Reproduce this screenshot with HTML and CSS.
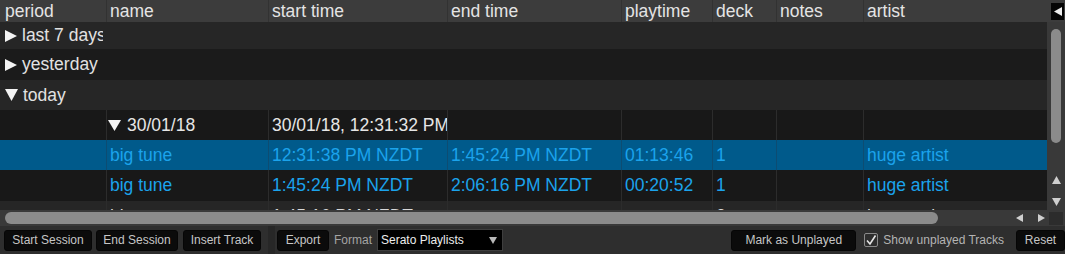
FILE: index.html
```html
<!DOCTYPE html>
<html lang="en">
<head>
  <meta charset="UTF-8">
  <title>History</title>
  <link rel="stylesheet" href="styles.css">
</head>
<body>
  <div class="main">
    <div class="table">
      <div class="row head">
        <div class="cell">period</div>
        <div class="cell">name</div>
        <div class="cell">start time</div>
        <div class="cell">end time</div>
        <div class="cell">playtime</div>
        <div class="cell">deck</div>
        <div class="cell">notes</div>
        <div class="cell">artist</div>
      </div>

      <div class="row group r1">
        <div class="cell period"><svg class="tri" width="12" height="12" viewBox="0 0 12 12"><path d="M0 0L12 6L0 12Z" fill="#f4f4f4"/></svg>last 7 days</div>
      </div>
      <div class="row group r2">
        <div class="cell period"><svg class="tri" width="12" height="12" viewBox="0 0 12 12"><path d="M0 0L12 6L0 12Z" fill="#f4f4f4"/></svg>yesterday</div>
      </div>
      <div class="row group r3">
        <div class="cell period"><svg class="tri" width="13" height="12" viewBox="0 0 13 12"><path d="M0 0H13L6.5 12Z" fill="#f4f4f4"/></svg>today</div>
      </div>

      <div class="row data session">
        <div class="cell"></div>
        <div class="cell name"><svg class="tri down" width="13" height="11" viewBox="0 0 13 11"><path d="M0 0H13L6.5 11Z" fill="#f4f4f4"/></svg>30/01/18</div>
        <div class="cell">30/01/18, 12:31:32 PM NZDT</div>
        <div class="cell"></div>
        <div class="cell"></div>
        <div class="cell"></div>
        <div class="cell"></div>
        <div class="cell"></div>
      </div>
      <div class="row data track selected">
        <div class="cell"></div>
        <div class="cell">big tune</div>
        <div class="cell">12:31:38 PM NZDT</div>
        <div class="cell">1:45:24 PM NZDT</div>
        <div class="cell">01:13:46</div>
        <div class="cell">1</div>
        <div class="cell"></div>
        <div class="cell">huge artist</div>
      </div>
      <div class="row data track">
        <div class="cell"></div>
        <div class="cell">big tune</div>
        <div class="cell">1:45:24 PM NZDT</div>
        <div class="cell">2:06:16 PM NZDT</div>
        <div class="cell">00:20:52</div>
        <div class="cell">1</div>
        <div class="cell"></div>
        <div class="cell">huge artist</div>
      </div>
      <div class="row data played">
        <div class="cell"></div>
        <div class="cell">big tune</div>
        <div class="cell">1:45:16 PM NZDT</div>
        <div class="cell"></div>
        <div class="cell"></div>
        <div class="cell">2</div>
        <div class="cell"></div>
        <div class="cell">huge artist</div>
      </div>
    </div>

    <div class="vscroll">
      <div class="vtop">
        <div class="collapse"><svg width="8" height="9" viewBox="0 0 8 9"><path d="M8 0V9L0 4.5Z" fill="#eee"/></svg></div>
      </div>
      <div class="vthumb"></div>
      <svg class="arrow up" width="9" height="8" viewBox="0 0 9 8"><path d="M0 8H9L4.5 0Z" fill="#cfcfcf"/></svg>
      <svg class="arrow dn" width="9" height="8" viewBox="0 0 9 8"><path d="M0 0H9L4.5 8Z" fill="#cfcfcf"/></svg>
    </div>
  </div>

  <div class="hscroll">
    <div class="hthumb"></div>
    <svg class="harrow" width="7" height="8" viewBox="0 0 7 8"><path d="M7 0V8L0 4Z" fill="#cfcfcf"/></svg>
    <svg class="harrow right" width="7" height="8" viewBox="0 0 7 8"><path d="M0 0V8L7 4Z" fill="#cfcfcf"/></svg>
    <div class="corner"></div>
  </div>

  <div class="toolbar">
    <button class="btn w-start">Start Session</button>
    <button class="btn w-end">End Session</button>
    <button class="btn w-insert">Insert Track</button>
    <div class="divider"></div>
    <button class="btn w-export">Export</button>
    <span class="label">Format</span>
    <div class="select">Serato Playlists<svg width="8" height="7" viewBox="0 0 8 7"><path d="M0 0H8L4 7Z" fill="#b8b8b8"/></svg></div>
    <div class="spacer"></div>
    <button class="btn w-mark">Mark as Unplayed</button>
    <label class="check">
      <span class="box"><svg width="12" height="12" viewBox="0 0 12 12"><path d="M2 6.5L5 10L10.5 1.5" fill="none" stroke="#e6e6e6" stroke-width="1.6"/></svg></span>
      Show unplayed Tracks
    </label>
    <button class="btn w-reset">Reset</button>
  </div>
</body>
</html>
```

FILE: styles.css
```css
* {
  box-sizing: border-box;
}

body {
  margin: 0;
  width: 1065px;
  height: 254px;
  overflow: hidden;
  background-color: #2e2e2e;
  font-family: "Liberation Sans", Arial, sans-serif;
}

.main {
  display: flex;
  height: 210px;
}

.table {
  width: 1047px;
  height: 210px;
  overflow: hidden;
  background-color: #1a1a1a;
}

.row {
  display: grid;
  grid-template-columns: 106px 162px 179px 174px 91px 64px 87px 184px;
}

.cell {
  display: flex;
  align-items: center;
  gap: 5px;
  padding-left: 3px;
  white-space: nowrap;
  overflow: hidden;
  font-size: 17.5px;
}

.head {
  height: 22px;
  background-color: #3c3c3c;
  color: #e4e4e4;
}

.head .cell + .cell {
  border-left: 1px solid #323232;
}

.head .cell:first-child {
  padding-left: 5px;
}

.group {
  color: #e2e2e2;
}

.group .period {
  padding-left: 5px;
  clip-path: inset(0 3px 0 0);
}

.r1 { height: 27px; background-color: #262626; }
.r2 { height: 31px; background-color: #1b1b1b; }
.r3 { height: 30px; background-color: #262626; }

.data {
  height: 30px;
  background-color: #181818;
}

.data .cell + .cell {
  border-left: 1px solid #2c2c2c;
}

.session {
  color: #e6e6e6;
}

.session .name {
  padding-left: 1px;
  gap: 6px;
}

.track {
  color: #1ba3ec;
}

.selected {
  background-color: #005a8b;
}

.selected .cell + .cell {
  border-left-color: #0d4c72;
}

.track + .track {
  height: 31px;
}

.played {
  background-color: #262626;
  color: #d8d8d8;
}

/* vertical scroller */
.vscroll {
  width: 18px;
  background-color: #393939;
  display: flex;
  flex-direction: column;
  align-items: center;
}

.vtop {
  width: 100%;
  height: 22px;
  background-color: #3c3c3c;
  display: flex;
  align-items: center;
  justify-content: flex-end;
  padding-right: 1px;
}

.collapse {
  width: 13px;
  height: 17px;
  background-color: #050505;
  display: flex;
  align-items: center;
  justify-content: center;
}

.vthumb {
  width: 10px;
  height: 114px;
  margin-top: 7px;
  border-radius: 5px;
  background-color: #8b8b8b;
}

.arrow.up {
  margin-top: 33px;
}

.arrow.dn {
  margin-top: 14px;
}

/* horizontal scroller */
.hscroll {
  height: 16px;
  display: flex;
  align-items: center;
  background-color: #393939;
}

.hthumb {
  width: 933px;
  height: 12px;
  margin-left: 5px;
  border-radius: 6px;
  background-color: #8b8b8b;
}

.harrow {
  margin-left: 78px;
}

.harrow.right {
  margin-left: 15px;
}

.corner {
  width: 14px;
  height: 13px;
  margin-left: 4px;
  background-color: #2c2c2c;
}

/* toolbar */
.toolbar {
  height: 28px;
  display: flex;
  align-items: center;
  padding-left: 4px;
  background-color: #2e2e2e;
}

.btn {
  height: 21px;
  padding: 0;
  border: 1px solid #060606;
  border-radius: 3px;
  background-color: #0b0b0b;
  color: #c6c6c6;
  font-family: "Liberation Sans", Arial, sans-serif;
  font-size: 12px;
}

.w-start { width: 88px; }
.w-end { width: 82px; margin-left: 4px; }
.w-insert { width: 78px; margin-left: 5px; }
.w-export { width: 52px; }
.w-mark { width: 125px; }
.w-reset { width: 49px; margin-left: 12px; }

.divider {
  width: 7px;
  height: 28px;
  margin: 0 2px 0 7px;
  background-color: #272727;
}

.label {
  margin-left: 5px;
  color: #a4a4a4;
  font-size: 12px;
}

.select {
  width: 126px;
  height: 22px;
  margin-left: 5px;
  display: flex;
  align-items: center;
  justify-content: space-between;
  padding: 0 5px 0 3px;
  border: 1px solid #3e3e3e;
  background-color: #000;
  color: #ededed;
  font-size: 12px;
}

.spacer {
  flex: 1;
}

.check {
  display: flex;
  align-items: center;
  gap: 5px;
  margin-left: 8px;
  color: #b4b4b4;
  font-size: 12px;
}

.box {
  width: 14px;
  height: 14px;
  border: 1px solid #8a8a8a;
  border-radius: 2px;
  display: flex;
  align-items: center;
  justify-content: center;
}
```
